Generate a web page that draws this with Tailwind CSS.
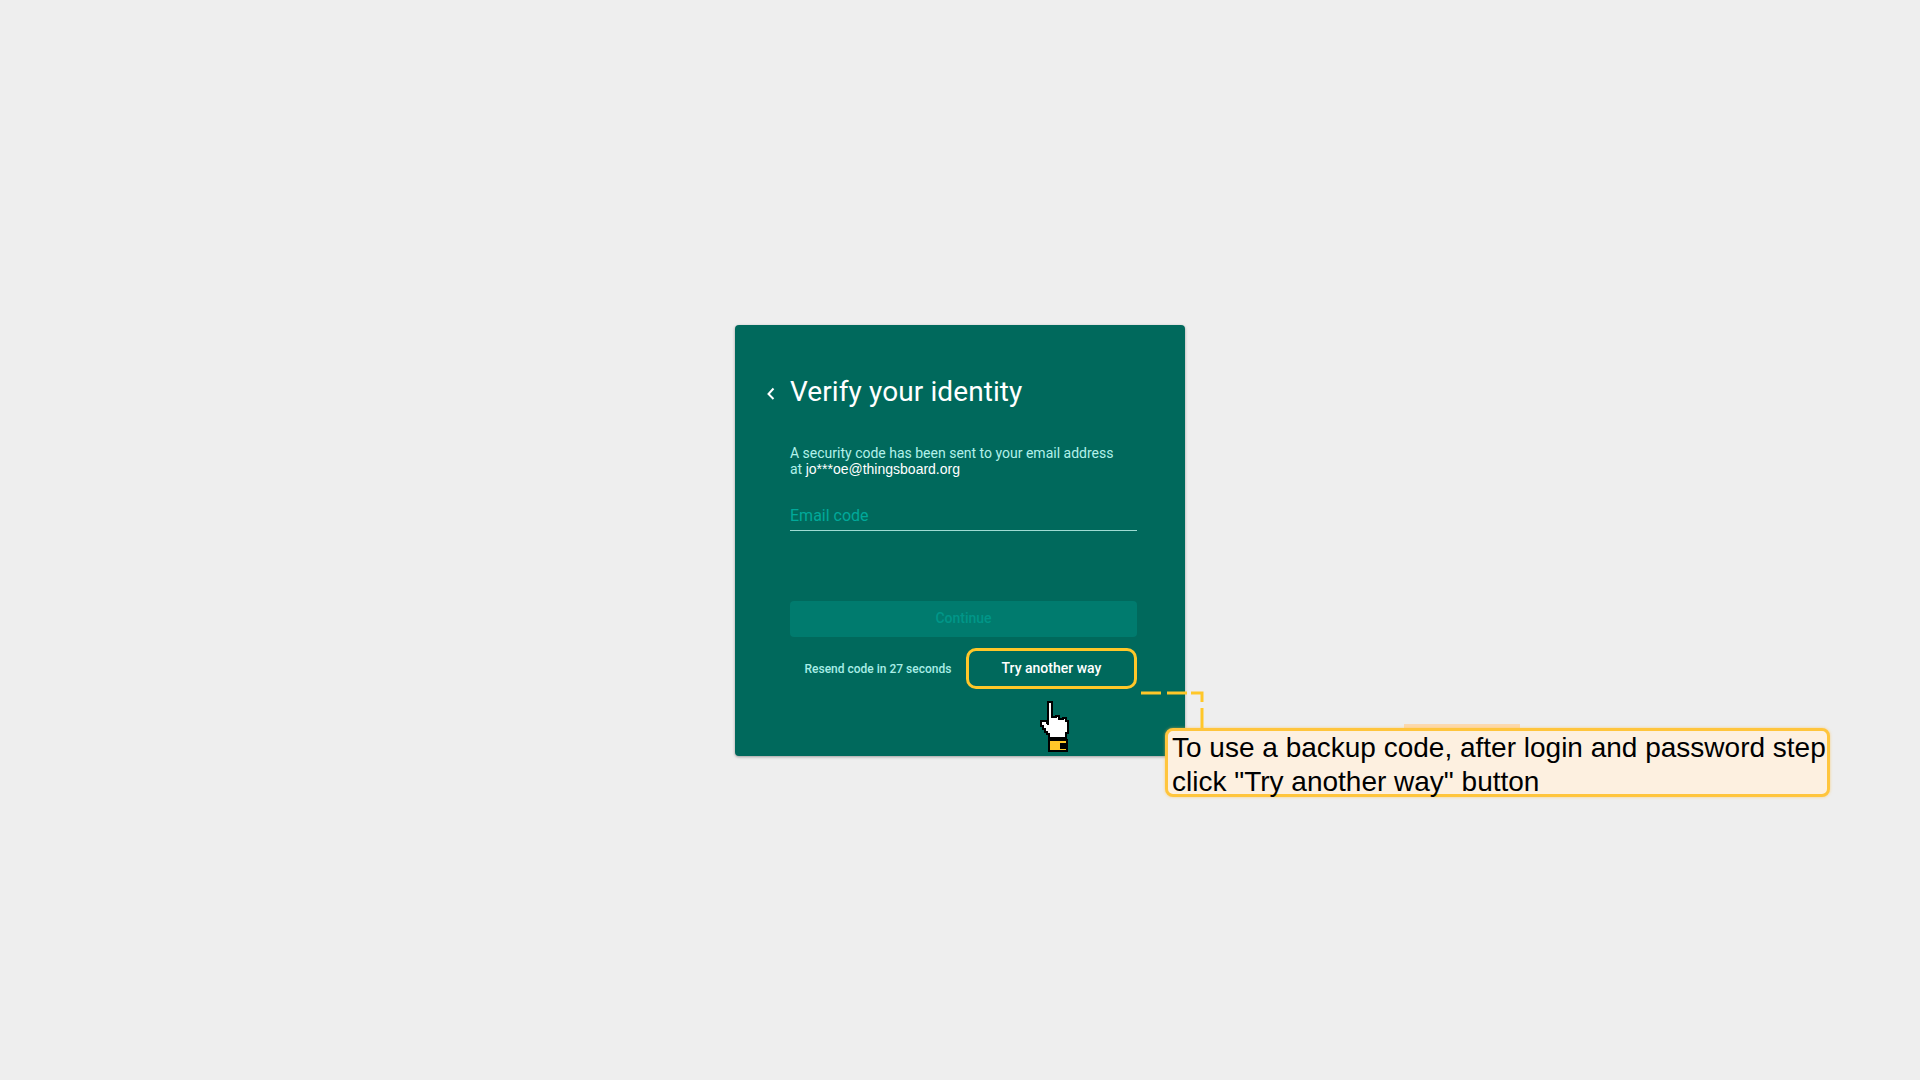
<!DOCTYPE html>
<html>
<head>
<meta charset="utf-8">
<script src="https://cdn.jsdelivr.net/npm/@tailwindcss/browser@4"></script>
</head>
<body class="m-0 bg-[#eeeeee]">
<div class="relative w-[1920px] h-[1080px] flex items-center justify-center overflow-hidden font-['Roboto',sans-serif]">
  <div class="w-[450px] h-[431px] bg-[#00695c] rounded-[4px] shadow-[0_1px_3px_rgba(0,0,0,0.35)] pt-[48px] pl-[24px] pr-[48px] flex flex-col">
    <div class="flex items-center h-[38px]">
      <svg class="w-[24px] h-[24px] mr-[7px] mt-[3px]" viewBox="0 0 24 24" fill="none" stroke="#ffffff" stroke-width="2"><path d="M14.5 7.5 L9.5 13 L14.5 18"/></svg>
      <h1 class="text-[28px] leading-[38px] text-white font-normal tracking-[0.1px]">Verify your identity</h1>
    </div>
    <div class="ml-[31px] mt-[34px] text-[14px] leading-[16px] text-[#b2f1ea]">A security code has been sent to your email address<br>at <span class="text-white font-['Liberation_Sans',sans-serif]">jo***oe@thingsboard.org</span></div>
    <div class="ml-[31px] mt-[28px] h-[26px] border-b border-[#9fdcd3] text-[16px] leading-[22px] text-[#00a99a]">Email code</div>
    <div class="ml-[31px] mt-[70px] h-[36px] rounded-[4px] bg-[#007b6e] flex items-center justify-center text-[14px] font-medium text-[#009688]">Continue</div>
    <div class="ml-[31px] mt-[12px] flex items-center h-[40px]">
      <div class="w-[178px] text-center text-[12px] font-medium text-[#a8ede6]">Resend code in 27 seconds</div>
      <div class="w-[173px] h-[41px] rounded-[10px] border-[3px] border-[#ffc729] flex items-center justify-center text-[14px] font-medium text-white">Try another way</div>
    </div>
  </div>

  <svg class="absolute left-[1140px] top-[686px]" width="66" height="44" viewBox="0 0 66 44" fill="none" stroke="#ffc729" stroke-width="3"><path d="M1 7 H62 V42" stroke-dasharray="20 6 20 4"/></svg>

  <svg class="absolute left-[1036px] top-[700px]" width="38" height="54" viewBox="0 0 38 54" shape-rendering="crispEdges">
    <path d="M12 2 H16 V17 H20 V16 H23 V19 H27 V18 H30 V21 H32 V33 H30 V38 H13 V34 H11 V32 H9 V29 H7 V26 H5 V21 H10 L12 25 Z" fill="#ffffff" stroke="#000000" stroke-width="1.5"/>
    <rect x="13" y="40" width="18" height="11" fill="#ffc729" stroke="#000" stroke-width="2"/>
    <rect x="24" y="43" width="6" height="6" fill="#000"/>
  </svg>

  <div class="absolute left-[1404px] top-[724px] w-[116px] h-[6px] bg-[#fcd9ae]"></div>
  <div class="absolute left-[1165px] top-[728px] w-[665px] h-[69px] rounded-[8px] border-[3px] border-[#ffc53d] bg-[#fdf0e0] shadow-[0_0_3px_rgba(255,190,70,0.6)] pl-[4px] pt-[-1px] text-[28px] leading-[34px] text-black whitespace-nowrap font-['Liberation_Sans',sans-serif]">To use a backup code, after login and password step<br>click "Try another way" button</div>
</div>
</body>
</html>
